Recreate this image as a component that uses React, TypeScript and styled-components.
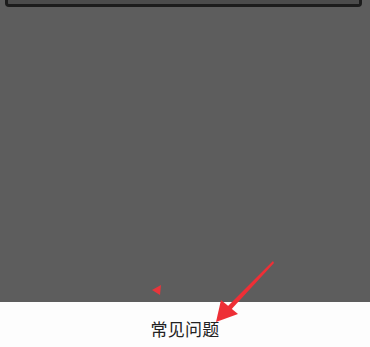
import styled, { createGlobalStyle } from "styled-components";

const Global = createGlobalStyle`
    html, body {
        margin: 0;
        padding: 0;
        background: #5d5d5d;
    }
`;

const Page = styled.div`
    position: relative;
    width: 370px;
    height: 347px;
    display: flex;
    flex-direction: column;
    overflow: hidden;
    font-family: "Noto Sans CJK SC", "Noto Sans", sans-serif;
`;

const Dim = styled.div`
    flex: 1;
    background: #5d5d5d;
    padding: 0 8px 0 5px;
`;

const Panel = styled.div`
    height: 7px;
    background: #4b4b4b;
    border: 3px solid #1c1c1c;
    border-top: none;
    border-radius: 0 0 4px 4px;
    box-sizing: border-box;
`;

const Sheet = styled.div`
    height: 45px;
    background: #fdfdfd;
    display: flex;
    align-items: center;
    justify-content: center;
    padding-top: 8px;
    box-sizing: border-box;
`;

const Title = styled.span`
    font-size: 17px;
    color: #222;
    letter-spacing: 0.2px;
`;

const Marks = styled.svg`
    position: absolute;
    left: 0;
    top: 0;
    pointer-events: none;
`;

export default function App() {
    return (
        <Page>
            <Global />
            <Dim>
                <Panel />
            </Dim>
            <Sheet>
                <Title>常见问题</Title>
            </Sheet>
            <Marks width="370" height="347" viewBox="0 0 370 347">
                <polygon points="152,290 161,285 160,295" fill="#e8353b" />
                <polygon points="273,261 274,263 228,313 225,309" fill="#ee2f36" />
                <polygon points="216,322 221,300 238,314" fill="#ee2f36" />
            </Marks>
        </Page>
    );
}
